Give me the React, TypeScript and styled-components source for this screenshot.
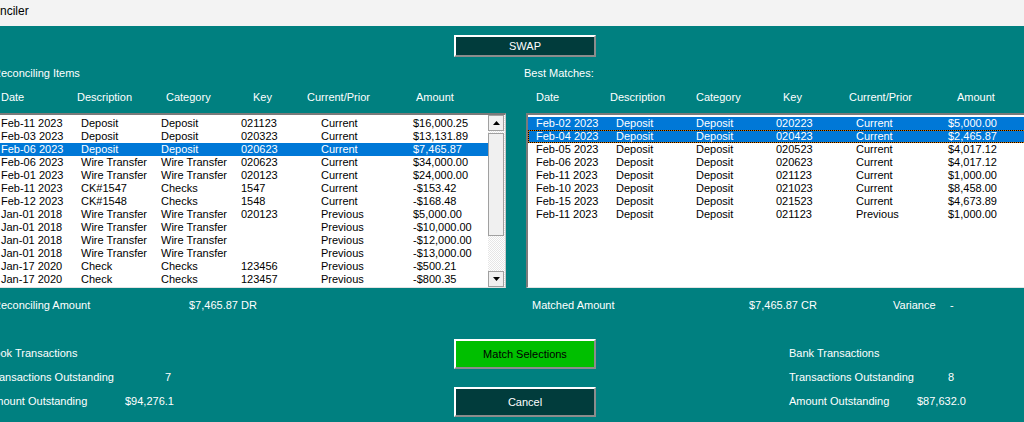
import styled, { createGlobalStyle } from 'styled-components';

const GlobalStyle = createGlobalStyle`
  html, body {
    margin: 0;
    padding: 0;
    width: 1024px;
    height: 422px;
    overflow: hidden;
    background: #008080;
  }
  * {
    box-sizing: border-box;
  }
`;

interface Row {
  date: string;
  desc: string;
  cat: string;
  key: string;
  period: string;
  amount: string;
}

const ITEMS: Row[] = [
  { date: 'Feb-11 2023', desc: 'Deposit', cat: 'Deposit', key: '021123', period: 'Current', amount: '$16,000.25' },
  { date: 'Feb-03 2023', desc: 'Deposit', cat: 'Deposit', key: '020323', period: 'Current', amount: '$13,131.89' },
  { date: 'Feb-06 2023', desc: 'Deposit', cat: 'Deposit', key: '020623', period: 'Current', amount: '$7,465.87' },
  { date: 'Feb-06 2023', desc: 'Wire Transfer', cat: 'Wire Transfer', key: '020623', period: 'Current', amount: '$34,000.00' },
  { date: 'Feb-01 2023', desc: 'Wire Transfer', cat: 'Wire Transfer', key: '020123', period: 'Current', amount: '$24,000.00' },
  { date: 'Feb-11 2023', desc: 'CK#1547', cat: 'Checks', key: '1547', period: 'Current', amount: '-$153.42' },
  { date: 'Feb-12 2023', desc: 'CK#1548', cat: 'Checks', key: '1548', period: 'Current', amount: '-$168.48' },
  { date: 'Jan-01 2018', desc: 'Wire Transfer', cat: 'Wire Transfer', key: '020123', period: 'Previous', amount: '$5,000.00' },
  { date: 'Jan-01 2018', desc: 'Wire Transfer', cat: 'Wire Transfer', key: '', period: 'Previous', amount: '-$10,000.00' },
  { date: 'Jan-01 2018', desc: 'Wire Transfer', cat: 'Wire Transfer', key: '', period: 'Previous', amount: '-$12,000.00' },
  { date: 'Jan-01 2018', desc: 'Wire Transfer', cat: 'Wire Transfer', key: '', period: 'Previous', amount: '-$13,000.00' },
  { date: 'Jan-17 2020', desc: 'Check', cat: 'Checks', key: '123456', period: 'Previous', amount: '-$500.21' },
  { date: 'Jan-17 2020', desc: 'Check', cat: 'Checks', key: '123457', period: 'Previous', amount: '-$800.35' },
];

const MATCHES: Row[] = [
  { date: 'Feb-02 2023', desc: 'Deposit', cat: 'Deposit', key: '020223', period: 'Current', amount: '$5,000.00' },
  { date: 'Feb-04 2023', desc: 'Deposit', cat: 'Deposit', key: '020423', period: 'Current', amount: '$2,465.87' },
  { date: 'Feb-05 2023', desc: 'Deposit', cat: 'Deposit', key: '020523', period: 'Current', amount: '$4,017.12' },
  { date: 'Feb-06 2023', desc: 'Deposit', cat: 'Deposit', key: '020623', period: 'Current', amount: '$4,017.12' },
  { date: 'Feb-11 2023', desc: 'Deposit', cat: 'Deposit', key: '021123', period: 'Current', amount: '$1,000.00' },
  { date: 'Feb-10 2023', desc: 'Deposit', cat: 'Deposit', key: '021023', period: 'Current', amount: '$8,458.00' },
  { date: 'Feb-15 2023', desc: 'Deposit', cat: 'Deposit', key: '021523', period: 'Current', amount: '$4,673.89' },
  { date: 'Feb-11 2023', desc: 'Deposit', cat: 'Deposit', key: '021123', period: 'Previous', amount: '$1,000.00' },
];

const HEADERS = ['Date', 'Description', 'Category', 'Key', 'Current/Prior', 'Amount'];

const Window = styled.div`
  width: 1024px;
  height: 422px;
  overflow: hidden;
  font-family: 'Liberation Sans', Arial, sans-serif;
  font-size: 11px;
  color: #fff;
`;

const TitleBar = styled.div`
  height: 26px;
  background: #f3f3f3;
  color: #000;
  font-size: 12px;
  line-height: 22px;
  text-indent: -28px;
  white-space: nowrap;
`;

const Body = styled.div`
  background: #008080;
  height: 396px;
  display: flex;
  flex-direction: column;
`;

const ActionButton = styled.button<{ $variant?: 'dark' | 'green'; $h: number }>`
  width: 142px;
  height: ${(p) => p.$h}px;
  padding: 0;
  font-family: 'Liberation Sans', Arial, sans-serif;
  font-size: 11px;
  border: 2px solid;
  border-color: #ffffff #8c8c8c #8c8c8c #ffffff;
  background: ${(p) => (p.$variant === 'green' ? '#00bf00' : '#013c3c')};
  color: ${(p) => (p.$variant === 'green' ? '#000' : '#fff')};
`;

const SwapRow = styled.div`
  padding: 9px 0 0 454px;
  display: flex;
`;

const Panels = styled.div`
  display: flex;
  margin-top: 9px;
`;

const Panel = styled.div<{ $offset: number; $width: number }>`
  margin-left: ${(p) => p.$offset}px;
  width: ${(p) => p.$width}px;
  flex-shrink: 0;
  display: flex;
  flex-direction: column;
`;

const SectionLabel = styled.div<{ $indent: number }>`
  height: 14px;
  line-height: 14px;
  margin-left: ${(p) => p.$indent}px;
  white-space: nowrap;
`;

const HeaderRow = styled.div<{ $cols: string }>`
  display: grid;
  grid-template-columns: ${(p) => p.$cols};
  height: 14px;
  line-height: 14px;
  margin-top: 10px;
  padding-left: 10px;
  white-space: nowrap;
`;

const ListBox = styled.div`
  margin-top: 9px;
  height: 175px;
  background: #fff;
  border-style: solid;
  border-width: 2px 1px 1px 2px;
  border-color: #7a7a7a #c8c8c8 #e3e3e3 #7a7a7a;
  display: flex;
  color: #000;
`;

const Rows = styled.div`
  flex: 1;
  padding-top: 2px;
  display: flex;
  flex-direction: column;
`;

const ListRow = styled.div<{ $selected?: boolean; $focused?: boolean }>`
  display: grid;
  grid-template-columns: 80px 80px 80px 80px 92px 1fr;
  height: 13px;
  line-height: 13px;
  padding-left: 8px;
  white-space: nowrap;
  background: ${(p) => (p.$selected ? '#0078d7' : 'transparent')};
  color: ${(p) => (p.$selected ? '#fff' : '#000')};
  box-shadow: ${(p) => (p.$focused ? 'inset 0 0 0 1px #e07800' : 'none')};
  outline: ${(p) => (p.$focused ? '1px dotted #000' : 'none')};
  outline-offset: -1px;
`;

const ScrollBar = styled.div`
  width: 17px;
  display: flex;
  flex-direction: column;
  background-color: #fff;
  background-image: repeating-conic-gradient(#e6e6e6 0 25%, #fff 0 50%);
  background-size: 2px 2px;
`;

const ScrollButton = styled.div`
  height: 16px;
  width: 16px;
  background: #f0f0f0;
  border: 1px solid #a0a0a0;
  display: flex;
  align-items: center;
  justify-content: center;
`;

const Thumb = styled.div`
  margin-top: 2px;
  height: 103px;
  width: 16px;
  background: #f0f0f0;
  border: 1px solid #a0a0a0;
`;

const Track = styled.div`
  flex: 1;
`;

const SummaryRow = styled.div`
  display: flex;
  margin: 10px 0 0 -7px;
  height: 14px;
  line-height: 14px;
  white-space: nowrap;
`;

const Cell = styled.div<{ $w?: number }>`
  width: ${(p) => (p.$w ? `${p.$w}px` : 'auto')};
  flex-shrink: 0;
`;

const Lower = styled.div`
  display: flex;
  margin-top: 27px;
`;

const StatsColumn = styled.div<{ $width: number; $offset?: number }>`
  width: ${(p) => p.$width}px;
  margin-left: ${(p) => p.$offset ?? 0}px;
  flex-shrink: 0;
  display: flex;
  flex-direction: column;
  gap: 10px;
  padding-top: 7px;
`;

const StatRow = styled.div<{ $indent?: number }>`
  display: flex;
  height: 14px;
  line-height: 14px;
  margin-left: ${(p) => p.$indent ?? 0}px;
  white-space: nowrap;
`;

const ButtonColumn = styled.div`
  display: flex;
  flex-direction: column;
  gap: 18px;
  width: 142px;
  flex-shrink: 0;
`;

const Arrow = ({ down }: { down?: boolean }) => (
  <svg width="7" height="4" viewBox="0 0 7 4">
    <path d={down ? 'M0 0H7L3.5 4Z' : 'M0 4H7L3.5 0Z'} fill="#000" />
  </svg>
);

const DataRow = ({ row, selected, focused }: { row: Row; selected?: boolean; focused?: boolean }) => (
  <ListRow $selected={selected} $focused={focused}>
    <span>{row.date}</span>
    <span>{row.desc}</span>
    <span>{row.cat}</span>
    <span>{row.key}</span>
    <span>{row.period}</span>
    <span>{row.amount}</span>
  </ListRow>
);

export default function App() {
  return (
    <Window>
      <GlobalStyle />
      <TitleBar>Reconciler</TitleBar>
      <Body>
        <SwapRow>
          <ActionButton $h={22}>SWAP</ActionButton>
        </SwapRow>

        <Panels>
          <Panel $offset={-9} $width={515}>
            <SectionLabel $indent={2}>Reconciling Items</SectionLabel>
            <HeaderRow $cols="76px 89px 87px 54px 109px auto">
              {HEADERS.map((h) => (
                <span key={h}>{h}</span>
              ))}
            </HeaderRow>
            <ListBox>
              <Rows>
                {ITEMS.map((r, i) => (
                  <DataRow key={i} row={r} selected={i === 2} />
                ))}
              </Rows>
              <ScrollBar>
                <ScrollButton>
                  <Arrow />
                </ScrollButton>
                <Thumb />
                <Track />
                <ScrollButton>
                  <Arrow down />
                </ScrollButton>
              </ScrollBar>
            </ListBox>
          </Panel>

          <Panel $offset={20} $width={510}>
            <SectionLabel $indent={-2}>Best Matches:</SectionLabel>
            <HeaderRow $cols="74px 86px 87px 66px 108px auto">
              {HEADERS.map((h) => (
                <span key={h}>{h}</span>
              ))}
            </HeaderRow>
            <ListBox>
              <Rows>
                {MATCHES.map((r, i) => (
                  <DataRow key={i} row={r} selected={i < 2} focused={i === 1} />
                ))}
              </Rows>
            </ListBox>
          </Panel>
        </Panels>

        <SummaryRow>
          <Cell $w={196}>Reconciling Amount</Cell>
          <Cell $w={343}>$7,465.87 DR</Cell>
          <Cell $w={217}>Matched Amount</Cell>
          <Cell $w={144}>$7,465.87 CR</Cell>
          <Cell $w={57}>Variance</Cell>
          <Cell>-</Cell>
        </SummaryRow>

        <Lower>
          <StatsColumn $width={454}>
            <StatRow $indent={-13}>Book Transactions</StatRow>
            <StatRow $indent={-11}>
              <Cell $w={176}>Transactions Outstanding</Cell>
              <Cell>7</Cell>
            </StatRow>
            <StatRow $indent={-13}>
              <Cell $w={138}>Amount Outstanding</Cell>
              <Cell>$94,276.1</Cell>
            </StatRow>
          </StatsColumn>

          <ButtonColumn>
            <ActionButton $variant="green" $h={30}>
              Match Selections
            </ActionButton>
            <ActionButton $h={30}>Cancel</ActionButton>
          </ButtonColumn>

          <StatsColumn $width={235} $offset={193}>
            <StatRow>Bank Transactions</StatRow>
            <StatRow>
              <Cell $w={159}>Transactions Outstanding</Cell>
              <Cell>8</Cell>
            </StatRow>
            <StatRow>
              <Cell $w={128}>Amount Outstanding</Cell>
              <Cell>$87,632.0</Cell>
            </StatRow>
          </StatsColumn>
        </Lower>
      </Body>
    </Window>
  );
}
